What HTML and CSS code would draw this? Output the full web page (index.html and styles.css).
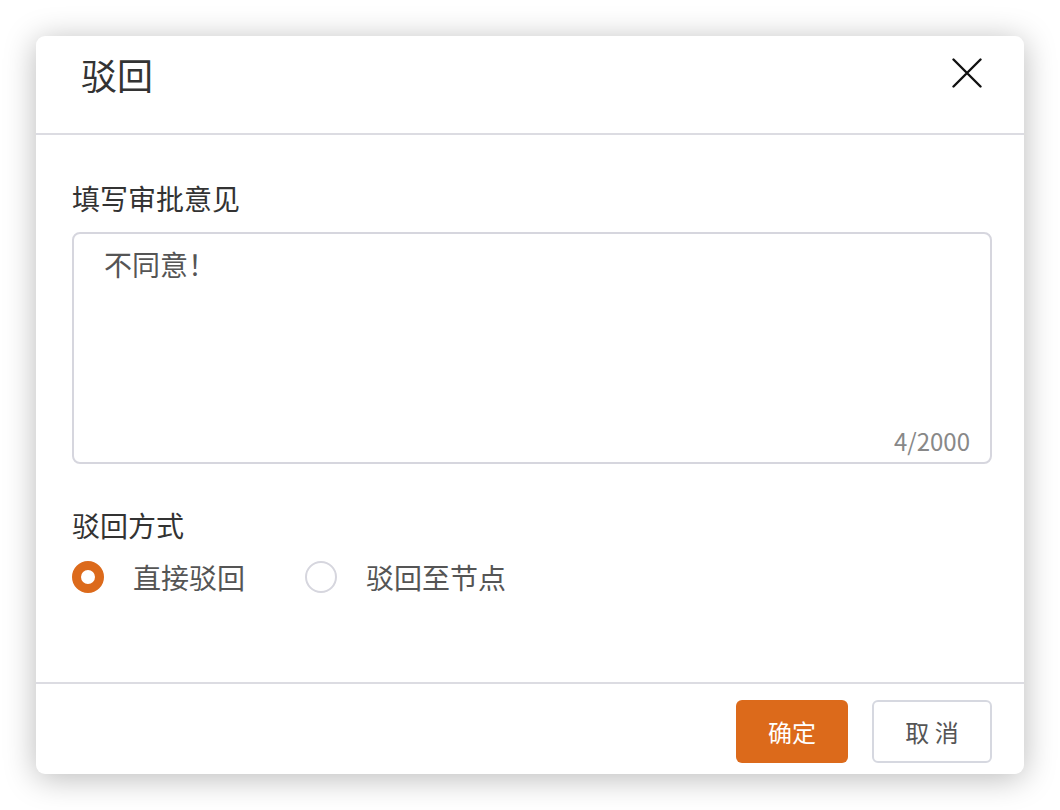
FILE: index.html
```html
<!DOCTYPE html>
<html lang="zh-CN">

<head>
    <meta charset="UTF-8" />
    <meta name="viewport" content="width=device-width, initial-scale=1.0" />
    <title>驳回</title>
    <link rel="stylesheet" href="styles.css">
</head>

<body>
    <div class="dialog">
        <div class="dialog-head">
            <h2 class="dialog-title">驳回</h2>
            <button class="close-btn" aria-label="关闭">
                <svg width="30" height="30" viewBox="0 0 30 30">
                    <path d="M1.5 1.5 L28.5 28.5 M28.5 1.5 L1.5 28.5" stroke="#111" stroke-width="2.4" stroke-linecap="round" fill="none" />
                </svg>
            </button>
        </div>

        <div class="dialog-body">
            <div class="field-label">填写审批意见</div>
            <div class="textbox">
                <div class="textbox-text">不同意！</div>
                <div class="textbox-count">4/2000</div>
            </div>

            <div class="field-label mode-label">驳回方式</div>
            <div class="radio-row">
                <label class="radio">
                    <span class="radio-dot checked"></span>
                    <span class="radio-text">直接驳回</span>
                </label>
                <label class="radio">
                    <span class="radio-dot"></span>
                    <span class="radio-text">驳回至节点</span>
                </label>
            </div>
        </div>

        <div class="dialog-foot">
            <button class="btn btn-primary">确定</button>
            <button class="btn btn-default">取 消</button>
        </div>
    </div>
</body>

</html>
```

FILE: styles.css
```css
* {
    box-sizing: border-box;
}

body {
    margin: 0;
    background: #fff;
    font-family: "Noto Sans CJK SC", "Noto Sans", sans-serif;
}

.dialog {
    margin: 36px;
    width: 988px;
    height: 738px;
    background: #fff;
    border-radius: 9px;
    box-shadow: 0 4px 32px rgba(0, 0, 0, 0.28);
    display: flex;
    flex-direction: column;
    overflow: hidden;
}

.dialog-head {
    height: 99px;
    border-bottom: 2px solid #dcdce2;
    display: flex;
    justify-content: space-between;
    align-items: flex-start;
    padding: 0 42px 0 45px;
}

.dialog-title {
    margin: 0;
    padding-top: 16px;
    font-size: 36px;
    line-height: 44px;
    font-weight: 400;
    color: #333;
}

.close-btn {
    margin-top: 22px;
    padding: 0;
    border: none;
    background: none;
    width: 30px;
    height: 30px;
    cursor: pointer;
}

.dialog-body {
    flex: 1;
    padding: 43px 32px 0 36px;
}

.field-label {
    font-size: 28px;
    line-height: 40px;
    color: #333;
}

.textbox {
    margin-top: 14px;
    height: 232px;
    border: 2px solid #d6d6de;
    border-radius: 8px;
    padding: 10px 20px 4px 30px;
    display: flex;
    flex-direction: column;
    justify-content: space-between;
}

.textbox-text {
    font-size: 28px;
    line-height: 40px;
    color: #555;
}

.textbox-count {
    align-self: flex-end;
    font-size: 24px;
    line-height: 34px;
    color: #888;
}

.mode-label {
    margin-top: 41px;
}

.radio-row {
    margin-top: 12px;
    display: flex;
    align-items: center;
    gap: 60px;
}

.radio {
    display: flex;
    align-items: center;
    gap: 29px;
    height: 40px;
}

.radio-dot {
    width: 32px;
    height: 32px;
    border-radius: 50%;
    border: 2px solid #d6d6de;
    background: #fff;
}

.radio-dot.checked {
    border: 9px solid #dc6a1b;
}

.radio-text {
    font-size: 28px;
    line-height: 40px;
    color: #555;
}

.dialog-foot {
    border-top: 2px solid #dcdce2;
    padding: 16px 32px 11px 0;
    display: flex;
    justify-content: flex-end;
    gap: 24px;
}

.btn {
    height: 63px;
    border-radius: 6px;
    font-family: "Noto Sans CJK SC", "Noto Sans", sans-serif;
    font-size: 24px;
    cursor: pointer;
}

.btn-primary {
    width: 112px;
    background: #dc6a1b;
    border: none;
    color: #fff;
}

.btn-default {
    width: 120px;
    background: #fff;
    border: 2px solid #d6d8e0;
    color: #555;
}
```
